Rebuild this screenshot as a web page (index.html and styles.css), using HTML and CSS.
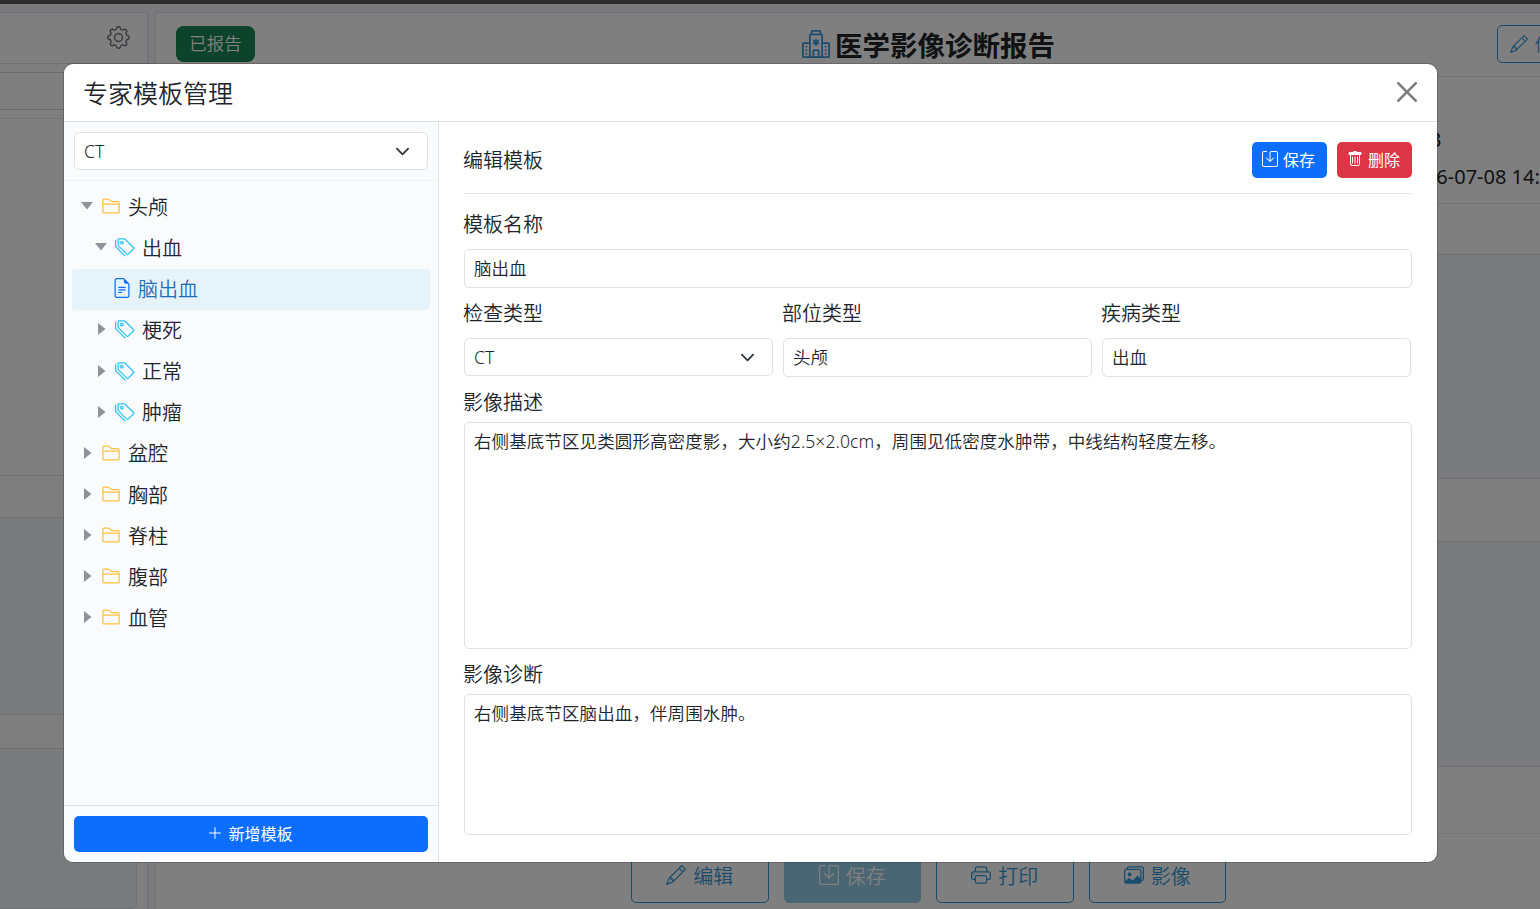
FILE: index.html
```html
<!DOCTYPE html>
<html lang="zh-CN">
<head>
  <meta charset="UTF-8">
  <meta name="viewport" content="width=device-width, initial-scale=1.0">
  <title>医学影像诊断报告 - 专家模板管理</title>
  <link rel="stylesheet" href="styles.css">
</head>
<body>
  <!-- Icon sprite -->
  <svg class="sprite">
    <symbol id="gear" viewBox="0 0 16 16"><path d="M8 4.754a3.246 3.246 0 1 0 0 6.492 3.246 3.246 0 0 0 0-6.492zM5.754 8a2.246 2.246 0 1 1 4.492 0 2.246 2.246 0 0 1-4.492 0z"/><path d="M9.796 1.343c-.527-1.79-3.065-1.79-3.592 0l-.094.319a.873.873 0 0 1-1.255.52l-.292-.16c-1.64-.892-3.433.902-2.54 2.541l.159.292a.873.873 0 0 1-.52 1.255l-.319.094c-1.79.527-1.79 3.065 0 3.592l.319.094a.873.873 0 0 1 .52 1.255l-.16.292c-.892 1.64.901 3.434 2.541 2.54l.292-.159a.873.873 0 0 1 1.255.52l.094.319c.527 1.79 3.065 1.79 3.592 0l.094-.319a.873.873 0 0 1 1.255-.52l.292.16c1.64.893 3.434-.902 2.54-2.541l-.159-.292a.873.873 0 0 1 .52-1.255l.319-.094c1.79-.527 1.79-3.065 0-3.592l-.319-.094a.873.873 0 0 1-.52-1.255l.16-.292c.893-1.64-.902-3.433-2.541-2.54l-.292.159a.873.873 0 0 1-1.255-.52l-.094-.319zm-2.633.283c.246-.835 1.428-.835 1.674 0l.094.319a1.873 1.873 0 0 0 2.693 1.115l.291-.16c.764-.415 1.6.42 1.184 1.185l-.159.292a1.873 1.873 0 0 0 1.116 2.692l.318.094c.835.246.835 1.428 0 1.674l-.319.094a1.873 1.873 0 0 0-1.115 2.693l.16.291c.415.764-.42 1.6-1.185 1.184l-.291-.159a1.873 1.873 0 0 0-2.693 1.116l-.094.318c-.246.835-1.428.835-1.674 0l-.094-.319a1.873 1.873 0 0 0-2.692-1.115l-.292.16c-.764.415-1.6-.42-1.184-1.185l.159-.291A1.873 1.873 0 0 0 1.945 8.93l-.319-.094c-.835-.246-.835-1.428 0-1.674l.319-.094A1.873 1.873 0 0 0 3.06 4.377l-.16-.292c-.415-.764.42-1.6 1.185-1.184l.292.159a1.873 1.873 0 0 0 2.692-1.115l.094-.319z"/></symbol>
    <symbol id="folder" viewBox="0 0 16 16"><path d="M1 3.5A1.5 1.5 0 0 1 2.5 2h2.764c.958 0 1.76.56 2.311 1.184C7.985 3.648 8.48 4 9 4h4.5A1.5 1.5 0 0 1 15 5.5v7a1.5 1.5 0 0 1-1.5 1.5h-11A1.5 1.5 0 0 1 1 12.5v-9zM2.5 3a.5.5 0 0 0-.5.5V6h12v-.5a.5.5 0 0 0-.5-.5H9c-.964 0-1.71-.629-2.174-1.154C6.374 3.334 5.82 3 5.264 3H2.5zM14 7H2v5.5a.5.5 0 0 0 .5.5h11a.5.5 0 0 0 .5-.5V7z"/></symbol>
    <symbol id="tags" viewBox="0 0 16 16"><path d="M3 2v4.586l7 7L14.586 9l-7-7H3zM2 2a1 1 0 0 1 1-1h4.586a1 1 0 0 1 .707.293l7 7a1 1 0 0 1 0 1.414l-4.586 4.586a1 1 0 0 1-1.414 0l-7-7A1 1 0 0 1 2 6.586V2z"/><path d="M5.5 5a.5.5 0 1 1 0-1 .5.5 0 0 1 0 1zm0 1a1.5 1.5 0 1 0 0-3 1.5 1.5 0 0 0 0 3zM1 7.086a1 1 0 0 0 .293.707L8.75 15.25l-.043.043a1 1 0 0 1-1.414 0l-7-7A1 1 0 0 1 0 7.586V3a1 1 0 0 1 1-1v5.086z"/></symbol>
    <symbol id="file" viewBox="0 0 16 16"><path d="M5.5 7a.5.5 0 0 0 0 1h5a.5.5 0 0 0 0-1h-5zM5 9.5a.5.5 0 0 1 .5-.5h5a.5.5 0 0 1 0 1h-5a.5.5 0 0 1-.5-.5zm0 2a.5.5 0 0 1 .5-.5h2a.5.5 0 0 1 0 1h-2a.5.5 0 0 1-.5-.5z"/><path d="M9.5 0H4a2 2 0 0 0-2 2v12a2 2 0 0 0 2 2h8a2 2 0 0 0 2-2V4.5L9.5 0zm0 1v2A1.5 1.5 0 0 0 11 4.5h2V14a1 1 0 0 1-1 1H4a1 1 0 0 1-1-1V2a1 1 0 0 1 1-1h5.5z"/></symbol>
    <symbol id="trash" viewBox="0 0 16 16"><path d="M5.5 5.5A.5.5 0 0 1 6 6v6a.5.5 0 0 1-1 0V6a.5.5 0 0 1 .5-.5zm2.5 0a.5.5 0 0 1 .5.5v6a.5.5 0 0 1-1 0V6a.5.5 0 0 1 .5-.5zm3 .5a.5.5 0 0 0-1 0v6a.5.5 0 0 0 1 0V6z"/><path d="M14.5 3a1 1 0 0 1-1 1H13v9a2 2 0 0 1-2 2H5a2 2 0 0 1-2-2V4h-.5a1 1 0 0 1-1-1V2a1 1 0 0 1 1-1H6a1 1 0 0 1 1-1h2a1 1 0 0 1 1 1h3.5a1 1 0 0 1 1 1v1zM4.118 4 4 4.059V13a1 1 0 0 0 1 1h6a1 1 0 0 0 1-1V4.059L11.882 4H4.118z"/></symbol>
    <symbol id="save" viewBox="0 0 16 16"><path d="M2 1a1 1 0 0 0-1 1v12a1 1 0 0 0 1 1h12a1 1 0 0 0 1-1V2a1 1 0 0 0-1-1H9.5a1 1 0 0 0-1 1v7.293l2.646-2.647a.5.5 0 0 1 .708.708l-3.5 3.5a.5.5 0 0 1-.708 0l-3.5-3.5a.5.5 0 1 1 .708-.708L7.5 9.293V2a2 2 0 0 1 2-2H14a2 2 0 0 1 2 2v12a2 2 0 0 1-2 2H2a2 2 0 0 1-2-2V2a2 2 0 0 1 2-2h2.5a.5.5 0 0 1 0 1H2z"/></symbol>
    <symbol id="plus" viewBox="0 0 16 16"><path d="M8 2a.5.5 0 0 1 .5.5v5h5a.5.5 0 0 1 0 1h-5v5a.5.5 0 0 1-1 0v-5h-5a.5.5 0 0 1 0-1h5v-5A.5.5 0 0 1 8 2z"/></symbol>
    <symbol id="pencil" viewBox="0 0 16 16"><path d="M12.146.146a.5.5 0 0 1 .708 0l3 3a.5.5 0 0 1 0 .708l-10 10a.5.5 0 0 1-.168.11l-5 2a.5.5 0 0 1-.65-.65l2-5a.5.5 0 0 1 .11-.168l10-10zM11.207 2.5 13.5 4.793 14.793 3.5 12.5 1.207 11.207 2.5zm1.586 3L10.5 3.207 4 9.707V10h.5a.5.5 0 0 1 .5.5v.5h.5a.5.5 0 0 1 .5.5v.5h.293l6.5-6.5zm-9.761 5.175-.106.106-1.528 3.821 3.821-1.528.106-.106A.5.5 0 0 1 5 12.5V12h-.5a.5.5 0 0 1-.5-.5V11h-.5a.5.5 0 0 1-.468-.325z"/></symbol>
    <symbol id="printer" viewBox="0 0 16 16"><path d="M2.5 8a.5.5 0 1 0 0-1 .5.5 0 0 0 0 1z"/><path d="M5 1a2 2 0 0 0-2 2v2H2a2 2 0 0 0-2 2v3a2 2 0 0 0 2 2h1v1a2 2 0 0 0 2 2h6a2 2 0 0 0 2-2v-1h1a2 2 0 0 0 2-2V7a2 2 0 0 0-2-2h-1V3a2 2 0 0 0-2-2H5zM4 3a1 1 0 0 1 1-1h6a1 1 0 0 1 1 1v2H4V3zm1 5a2 2 0 0 0-2 2v1H2a1 1 0 0 1-1-1V7a1 1 0 0 1 1-1h12a1 1 0 0 1 1 1v3a1 1 0 0 1-1 1h-1v-1a2 2 0 0 0-2-2H5zm7 2v3a1 1 0 0 1-1 1H5a1 1 0 0 1-1-1v-3a1 1 0 0 1 1-1h6a1 1 0 0 1 1 1z"/></symbol>
    <symbol id="images" viewBox="0 0 16 16"><path d="M4.502 9a1.5 1.5 0 1 0 0-3 1.5 1.5 0 0 0 0 3z"/><path d="M14.002 13a2 2 0 0 1-2 2h-10a2 2 0 0 1-2-2V5A2 2 0 0 1 2 3a2 2 0 0 1 2-2h10a2 2 0 0 1 2 2v8a2 2 0 0 1-1.998 2zM14 2H4a1 1 0 0 0-1 1h9.002a2 2 0 0 1 2 2v7A1 1 0 0 0 15 11V3a1 1 0 0 0-1-1zM2.002 4a1 1 0 0 0-1 1v8l2.646-2.354a.5.5 0 0 1 .63-.062l2.66 1.773 3.71-3.71a.5.5 0 0 1 .577-.094l1.777 1.947V5a1 1 0 0 0-1-1h-10z"/></symbol>
    <symbol id="hospital" viewBox="0 0 16 16"><path d="M8.5 5.034v1.1l.953-.55.5.867L9 7l.953.55-.5.866-.953-.55v1.1h-1v-1.1l-.953.55-.5-.866L7 7l-.953-.55.5-.866.953.55v-1.1h1ZM13.25 9a.25.25 0 0 0-.25.25v.5c0 .138.112.25.25.25h.5a.25.25 0 0 0 .25-.25v-.5a.25.25 0 0 0-.25-.25h-.5ZM13 11.25a.25.25 0 0 1 .25-.25h.5a.25.25 0 0 1 .25.25v.5a.25.25 0 0 1-.25.25h-.5a.25.25 0 0 1-.25-.25v-.5Zm.25 1.75a.25.25 0 0 0-.25.25v.5c0 .138.112.25.25.25h.5a.25.25 0 0 0 .25-.25v-.5a.25.25 0 0 0-.25-.25h-.5Zm-11-4a.25.25 0 0 0-.25.25v.5c0 .138.112.25.25.25h.5A.25.25 0 0 0 3 9.75v-.5A.25.25 0 0 0 2.750 9h-.5Zm0 2a.25.25 0 0 0-.25.25v.5c0 .138.112.25.25.25h.5a.25.25 0 0 0 .25-.25v-.5a.25.25 0 0 0-.25-.25h-.5ZM2 13.25a.25.25 0 0 1 .25-.25h.5a.25.25 0 0 1 .25.25v.5a.25.25 0 0 1-.25.25h-.5a.25.25 0 0 1-.25-.25v-.5Z"/><path d="M5 1a1 1 0 0 1 1-1h4a1 1 0 0 1 1 1v1a1 1 0 0 1 1 1v4h3a1 1 0 0 1 1 1v7a1 1 0 0 1-1 1H1a1 1 0 0 1-1-1V8a1 1 0 0 1 1-1h3V3a1 1 0 0 1 1-1V1Zm2 14h2v-3H7v3Zm3 0h1V3H5v12h1v-3a1 1 0 0 1 1-1h2a1 1 0 0 1 1 1v3Zm0-14H6v1h4V1Zm2 7v7h3V8h-3Zm-8 7V8H1v7h3Z"/></symbol>
    <symbol id="close" viewBox="0 0 16 16"><path d="M.293.293a1 1 0 0 1 1.414 0L8 6.586 14.293.293a1 1 0 1 1 1.414 1.414L9.414 8l6.293 6.293a1 1 0 0 1-1.414 1.414L8 9.414l-6.293 6.293a1 1 0 0 1-1.414-1.414L6.586 8 .293 1.707a1 1 0 0 1 0-1.414z"/></symbol>
    <symbol id="chevron" viewBox="0 0 16 16"><path d="m2 5 6 6 6-6" fill="none" stroke="#343a40" stroke-linecap="round" stroke-linejoin="round" stroke-width="2"/></symbol>
    <symbol id="caret-down" viewBox="0 0 12 12"><path d="M0 2h12L6 9.500z"/></symbol>
    <symbol id="caret-right" viewBox="0 0 12 12"><path d="M3 0l7.500 6L3 12z"/></symbol>
  </svg>

  <!-- Report page -->
  <div class="page">
    <div class="topbar"></div>
    <div class="workspace">
      <div class="side-panel">
        <div class="side-header"><svg class="icon"><use href="#gear"/></svg></div>
        <div class="side-search"></div>
        <div class="side-list"></div>
        <div class="side-title"></div>
        <div class="side-text"></div>
        <div class="side-title small"></div>
        <div class="side-text last"></div>
      </div>
      <div class="report-panel">
        <div class="report-header">
          <span class="badge">已报告</span>
          <h1><svg class="icon"><use href="#hospital"/></svg>医学影像诊断报告</h1>
          <button class="outline-btn"><svg class="icon"><use href="#pencil"/></svg>修改</button>
        </div>
        <div class="report-info">
          <p>3</p>
          <p>2026-07-08 14:</p>
        </div>
        <div class="report-title"></div>
        <div class="report-text"></div>
        <div class="report-title findings"></div>
        <div class="report-text diagnosis"></div>
        <div class="report-title sign"></div>
        <div class="report-actions">
          <button class="outline-btn"><svg class="icon"><use href="#pencil"/></svg>编辑</button>
          <button class="outline-btn solid"><svg class="icon"><use href="#save"/></svg>保存</button>
          <button class="outline-btn"><svg class="icon"><use href="#printer"/></svg>打印</button>
          <button class="outline-btn"><svg class="icon"><use href="#images"/></svg>影像</button>
        </div>
      </div>
    </div>
  </div>

  <!-- Template modal -->
  <div class="backdrop">
    <div class="modal">
      <div class="modal-header">
        <h2>专家模板管理</h2>
        <button class="close-btn"><svg class="icon"><use href="#close"/></svg></button>
      </div>
      <div class="modal-body">
        <div class="sidebar">
          <div class="sidebar-filter">
            <div class="select-wrap">
              <select class="field"><option>CT</option></select>
              <svg class="chevron"><use href="#chevron"/></svg>
            </div>
          </div>
          <ul class="tree">
            <li class="part"><svg class="caret"><use href="#caret-down"/></svg><svg class="icon folder"><use href="#folder"/></svg>头颅</li>
            <li class="disease"><svg class="caret"><use href="#caret-down"/></svg><svg class="icon tags"><use href="#tags"/></svg>出血</li>
            <li class="template active"><svg class="icon file"><use href="#file"/></svg>脑出血</li>
            <li class="disease"><svg class="caret"><use href="#caret-right"/></svg><svg class="icon tags"><use href="#tags"/></svg>梗死</li>
            <li class="disease"><svg class="caret"><use href="#caret-right"/></svg><svg class="icon tags"><use href="#tags"/></svg>正常</li>
            <li class="disease"><svg class="caret"><use href="#caret-right"/></svg><svg class="icon tags"><use href="#tags"/></svg>肿瘤</li>
            <li class="part"><svg class="caret"><use href="#caret-right"/></svg><svg class="icon folder"><use href="#folder"/></svg>盆腔</li>
            <li class="part"><svg class="caret"><use href="#caret-right"/></svg><svg class="icon folder"><use href="#folder"/></svg>胸部</li>
            <li class="part"><svg class="caret"><use href="#caret-right"/></svg><svg class="icon folder"><use href="#folder"/></svg>脊柱</li>
            <li class="part"><svg class="caret"><use href="#caret-right"/></svg><svg class="icon folder"><use href="#folder"/></svg>腹部</li>
            <li class="part"><svg class="caret"><use href="#caret-right"/></svg><svg class="icon folder"><use href="#folder"/></svg>血管</li>
          </ul>
          <div class="sidebar-footer">
            <button class="btn btn-primary"><svg class="icon"><use href="#plus"/></svg>新增模板</button>
          </div>
        </div>

        <div class="editor">
          <div class="editor-header">
            <h3>编辑模板</h3>
            <button class="btn btn-primary"><svg class="icon"><use href="#save"/></svg>保存</button>
            <button class="btn btn-danger"><svg class="icon"><use href="#trash"/></svg>删除</button>
          </div>
          <label for="tplName">模板名称</label>
          <input class="field" id="tplName" type="text" value="脑出血">
          <div class="row">
            <div>
              <label for="tplModality">检查类型</label>
              <div class="select-wrap">
                <select class="field" id="tplModality"><option>CT</option></select>
                <svg class="chevron"><use href="#chevron"/></svg>
              </div>
            </div>
            <div>
              <label for="tplPart">部位类型</label>
              <input class="field" id="tplPart" type="text" value="头颅">
            </div>
            <div>
              <label for="tplDisease">疾病类型</label>
              <input class="field" id="tplDisease" type="text" value="出血">
            </div>
          </div>
          <label class="area-label" for="tplFindings">影像描述</label>
          <textarea class="field findings-area" id="tplFindings">右侧基底节区见类圆形高密度影，大小约2.5×2.0cm，周围见低密度水肿带，中线结构轻度左移。</textarea>
          <label class="area-label" for="tplDiagnosis">影像诊断</label>
          <textarea class="field diagnosis-area" id="tplDiagnosis">右侧基底节区脑出血，伴周围水肿。</textarea>
        </div>
      </div>
    </div>
  </div>
</body>
</html>
```
FILE: styles.css
```css
* {
  box-sizing: border-box;
}
body {
  margin: 0;
  height: 100vh;
  overflow: hidden;
  font-family: "Noto Sans", "Noto Sans CJK SC", sans-serif;
  font-size: 20px;
  font-weight: 350;
  color: #212529;
}
h1, h2, h3, p, ul {
  margin: 0;
  padding: 0;
}
button, input, select, textarea {
  font: inherit;
  color: inherit;
}
.sprite {
  display: none;
}
.icon {
  width: 20px;
  height: 20px;
  fill: currentColor;
  flex: none;
}

/* Report page */
.page {
  height: 100vh;
  display: flex;
  flex-direction: column;
  background-color: #f3f5f9;
  overflow: hidden;
}
.topbar {
  height: 4px;
  background-color: #5b5b5c;
}
.workspace {
  flex: 1;
  display: flex;
  gap: 7px;
  padding-top: 8px;
}
.side-panel {
  width: 148px;
  flex: none;
  display: flex;
  flex-direction: column;
  background-color: #fff;
  border: 1px solid #e3e5ee;
  border-left: 0;
  border-bottom: 0;
}
.side-header {
  height: 51px;
  display: flex;
  justify-content: flex-end;
  align-items: center;
  padding: 0 17px 1px 0;
  color: #6c757d;
  border-bottom: 1px solid #dee2e6;
}
.side-header .icon {
  width: 23px;
  height: 23px;
}
.side-search {
  height: 38px;
  margin-top: 8px;
  border-top: 1px solid #d4d7db;
  border-bottom: 1px solid #d4d7db;
}
.side-list {
  height: 358px;
  margin-top: 8px;
  border-top: 1px solid #e9ecef;
  border-bottom: 1px solid #dee2e6;
}
.side-title {
  height: 42px;
  background-color: #fcfcfc;
  border-bottom: 1px solid #dee2e6;
}
.side-title.small {
  height: 34px;
}
.side-text {
  height: 197px;
  background-color: #f4f6f9;
  border-bottom: 1px solid #dee2e6;
}
.side-text.last {
  height: 160px;
  margin-right: 10px;
  border-right: 1px solid #dee2e6;
  border-radius: 0 0 5px 0;
}
.report-panel {
  width: 1500px;
  flex: none;
  display: flex;
  flex-direction: column;
  background-color: #fff;
  border: 1px solid #e3e5ee;
  border-bottom: 0;
}
.report-header {
  height: 64px;
  display: flex;
  align-items: center;
  padding: 0 0 2px 20px;
  border-bottom: 1px solid #e3e5ee;
}
.badge {
  width: 79px;
  height: 36px;
  line-height: 35px;
  text-align: center;
  font-size: 17.5px;
  color: #fff;
  background-color: #198754;
  border-radius: 7.5px;
}
.report-header h1 {
  display: flex;
  align-items: center;
  gap: 5px;
  margin-left: 547px;
  font-size: 27.5px;
  font-weight: 700;
}
.report-header h1 .icon {
  width: 28px;
  height: 28px;
  color: #3498db;
}
.outline-btn {
  display: flex;
  align-items: center;
  justify-content: center;
  gap: 7px;
  width: 137.5px;
  height: 56px;
  padding: 0;
  color: #3498db;
  background-color: transparent;
  border: 1px solid #3498db;
  border-radius: 5px;
}
.outline-btn.solid {
  color: #fff;
  background-color: #94cce6;
  border-color: #94cce6;
}
.report-header .outline-btn {
  justify-content: flex-start;
  width: 85px;
  height: 38px;
  margin-left: 442px;
  padding-left: 12px;
  font-size: 17.5px;
}
.report-header .outline-btn .icon {
  width: 18px;
  height: 18px;
}
.report-info {
  height: 127px;
  padding: 44px 0 0 1246px;
  border-bottom: 1px solid #e3e5ee;
}
.report-info p {
  height: 37px;
  line-height: 37px;
  white-space: nowrap;
  font-weight: 400;
}
.report-info p:first-child {
  padding-left: 28px;
}
.report-title {
  height: 51px;
  border-bottom: 1px solid #dcdde8;
}
.report-title.findings {
  height: 63px;
}
.report-title.sign {
  height: 67px;
  border-bottom-color: #eee;
}
.report-text {
  height: 224px;
  background-color: #f5f6fa;
  border-bottom: 1px solid #dcdde8;
}
.report-text.diagnosis {
  height: 225px;
}
.report-actions {
  display: flex;
  gap: 15px;
  padding: 13px 0 0 475px;
}

/* Modal */
.backdrop {
  position: absolute;
  inset: 0;
  padding: 63px 0 0 63px;
  background-color: rgba(0, 0, 0, 0.5);
}
.modal {
  width: 1375px;
  height: 800px;
  display: flex;
  flex-direction: column;
  background-color: #fff;
  background-clip: padding-box;
  border: 1px solid rgba(0, 0, 0, 0.175);
  border-radius: 10px;
  overflow: hidden;
}
.modal-header {
  height: 58px;
  flex: none;
  display: flex;
  align-items: center;
  justify-content: space-between;
  padding: 0 20px 2px 19px;
  border-bottom: 1px solid #dee2e6;
}
.modal-header h2 {
  font-size: 25px;
  font-weight: 350;
}
.close-btn {
  display: flex;
  padding: 0;
  color: #000;
  background: none;
  border: 0;
  opacity: 0.5;
}
.modal-body {
  flex: 1;
  display: flex;
}
.sidebar {
  width: 375px;
  display: flex;
  flex-direction: column;
  background-color: #fafbfd;
  border-right: 1px solid #dee2e6;
}
.sidebar-filter {
  height: 59px;
  padding: 10px;
  border-bottom: 1px solid #eef0f4;
}
.select-wrap {
  position: relative;
}
.chevron {
  position: absolute;
  right: 18.5px;
  top: 11.5px;
  width: 15px;
  height: 15px;
}
.field {
  display: block;
  width: 100%;
  height: 39px;
  padding: 0 10px 2px 9px;
  font-size: 17.5px;
  background-color: #fff;
  border: 1px solid #dee2e6;
  border-radius: 5px;
  outline: none;
}
select.field {
  height: 38px;
  padding-bottom: 1px;
  appearance: none;
}
.tree {
  flex: 1;
  padding: 6px 8px;
  list-style: none;
}
.tree li {
  display: flex;
  align-items: center;
  height: 41.15px;
  padding-bottom: 3px;
  border-radius: 4px;
}
.tree .part {
  padding-left: 9px;
}
.tree .disease {
  padding-left: 23px;
}
.tree .template {
  padding-left: 40px;
}
.tree .active {
  color: #1f6fb2;
  background-color: #e6f3fb;
}
.caret {
  width: 12px;
  height: 12px;
  margin-right: 8px;
  fill: #8e9299;
}
.folder {
  margin-right: 7px;
  color: #ffc13b;
}
.tags {
  margin-right: 7px;
  color: #2fc4ee;
}
.file {
  margin-right: 6px;
  color: #0d6efd;
}
.sidebar-footer {
  height: 57px;
  padding: 10px;
  border-top: 1px solid #dee2e6;
}
.btn {
  display: flex;
  align-items: center;
  justify-content: center;
  gap: 5px;
  width: 75px;
  height: 36px;
  padding: 0 2px 2px 0;
  font-size: 16px;
  font-weight: 400;
  color: #fff;
  border: 0;
  border-radius: 5px;
}
.btn .icon {
  width: 16px;
  height: 16px;
}
.btn-primary {
  background-color: #0d6efd;
}
.btn-danger {
  background-color: #dc3545;
}
.sidebar-footer .btn {
  width: 100%;
}

/* Editor */
.editor {
  flex: 1;
  padding: 20px 25px;
}
.editor-header {
  display: flex;
  gap: 10px;
  height: 52px;
  border-bottom: 1px solid #e4e6ea;
}
.editor-header h3 {
  flex: 1;
  margin-left: -1px;
  line-height: 38px;
  font-size: 20px;
  font-weight: 350;
}
.editor label {
  display: block;
  height: 50px;
  margin-left: -1px;
  line-height: 52px;
}
.editor > label:not(.area-label) {
  height: 55px;
  line-height: 62px;
}
.row {
  display: grid;
  grid-template-columns: repeat(3, 309px);
  gap: 10px;
}
.editor .area-label {
  height: 45px;
  line-height: 52px;
}
textarea.field {
  padding: 5px 10px 5px 9px;
  line-height: 26px;
  letter-spacing: 0.1px;
  resize: none;
}
.findings-area {
  height: 227px;
}
.diagnosis-area {
  height: 141px;
}
```
